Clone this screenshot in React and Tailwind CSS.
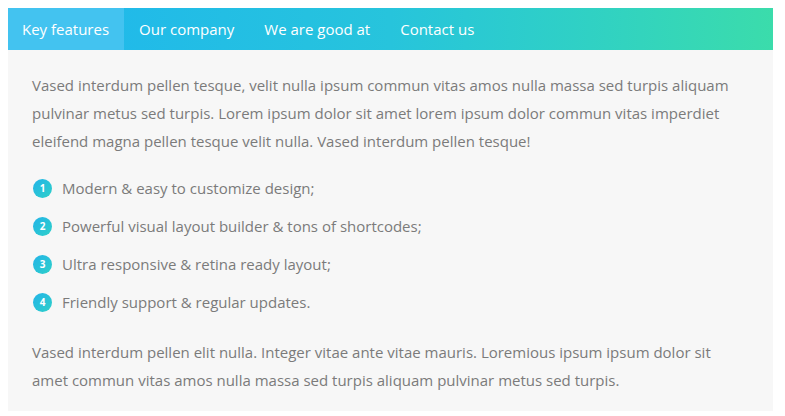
const tabs = ["Key features", "Our company", "We are good at", "Contact us"];

const items = [
  "Modern & easy to customize design;",
  "Powerful visual layout builder & tons of shortcodes;",
  "Ultra responsive & retina ready layout;",
  "Friendly support & regular updates.",
];

export default function App() {
  return (
    <div className="w-[785px] h-[416px] bg-white pt-2 pl-2" style={{ fontFamily: "'Open Sans', sans-serif" }}>
      <div className="w-[765px]">
        {/* Tabs */}
        <div className="flex h-[42px] bg-gradient-to-r from-[#1fb6ee] via-[#27c4dc] to-[#3bdcab]">
          {tabs.map((t, i) => (
            <div
              key={t}
              className={
                i === 0
                  ? "flex items-center pl-[14px] pr-[15px] text-[15px] text-white bg-[#43c3f0]"
                  : "flex items-center px-[15px] text-[15px] text-white"
              }
            >
              {t}
            </div>
          ))}
        </div>

        {/* Content */}
        <div className="bg-[#f7f7f7] pl-6 pr-6 pt-[21px] h-[361px] text-[15px] leading-[28px] text-[#7b7b7b]">
          <p>
            Vased interdum pellen tesque, velit nulla ipsum commun vitas amos nulla massa sed turpis aliquam
            pulvinar metus sed turpis. Lorem ipsum dolor sit amet lorem ipsum dolor commun vitas imperdiet
            eleifend magna pellen tesque velit nulla. Vased interdum pellen tesque!
          </p>

          <ul className="mt-[19px] flex flex-col gap-[10px]">
            {items.map((it, i) => (
              <li key={it} className="flex items-center">
                <span className="w-[19px] h-[19px] rounded-full bg-gradient-to-br from-[#25b3e8] to-[#2fd0c8] text-white text-[10px] font-bold flex items-center justify-center ml-px mr-[10px]">
                  {i + 1}
                </span>
                {it}
              </li>
            ))}
          </ul>

          <p className="mt-[22px]">
            Vased interdum pellen elit nulla. Integer vitae ante vitae mauris. Loremious ipsum ipsum dolor sit
            amet commun vitas amos nulla massa sed turpis aliquam pulvinar metus sed turpis.
          </p>
        </div>
      </div>
    </div>
  );
}
